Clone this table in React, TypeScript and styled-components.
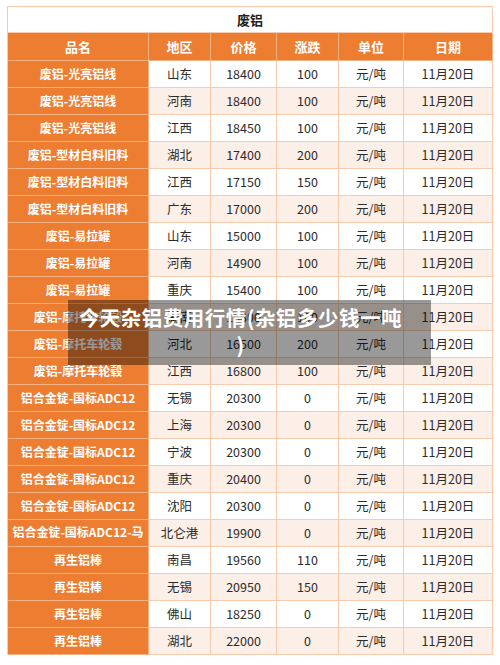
import React from "react"
import styled, { createGlobalStyle } from "styled-components"

const GlobalStyle = createGlobalStyle`
	html, body {
		margin: 0;
		padding: 0;
		background: #ffffff;
	}
	body {
		font-family: "Noto Sans CJK SC", "Noto Sans", "Liberation Sans", sans-serif;
	}
`

const COLS = "141px 62px 66px 62px 65px 89px"

const Page = styled.div`
	position: relative;
	width: 500px;
	height: 665px;
	overflow: hidden;
	padding: 6px 0 0 7px;
	box-sizing: border-box;
`

const Table = styled.div`
	width: 486px;
	border-top: 1px solid #f8cbad;
	border-left: 1px solid #f8cbad;
	box-sizing: border-box;
`

const Title = styled.div`
	height: 26px;
	display: flex;
	align-items: center;
	justify-content: center;
	font-size: 13px;
	font-weight: 700;
	color: #222;
	background: #fff;
	border-right: 1px solid #f8cbad;
	border-bottom: 1px solid #f8cbad;
	box-sizing: border-box;
`

const Row = styled.div<{ $h: number }>`
	display: grid;
	grid-template-columns: ${COLS};
	height: ${(p) => p.$h}px;
`

const Cell = styled.div<{ $kind: "head" | "name" | "data"; $alt?: boolean; $wrap?: boolean }>`
	display: flex;
	align-items: ${(p) => (p.$wrap ? "flex-start" : "center")};
	justify-content: center;
	text-align: center;
	overflow: hidden;
	box-sizing: border-box;
	border-right: 1px solid ${(p) => (p.$kind === "data" ? "#f8cbad" : "#f4b183")};
	border-bottom: 1px solid ${(p) => (p.$kind === "data" ? "#f8cbad" : "#f4b183")};
	background: ${(p) => (p.$kind === "data" ? (p.$alt ? "#fcefe7" : "#ffffff") : "#ed7d31")};
	color: ${(p) => (p.$kind === "data" ? "#2b2b2b" : "#ffffff")};
	font-size: ${(p) => (p.$kind === "data" ? "12.5px" : p.$kind === "head" ? "13px" : "12px")};
	font-weight: ${(p) => (p.$kind === "data" ? 400 : 700)};
	line-height: ${(p) => (p.$wrap ? "22px" : "1")};
	white-space: ${(p) => (p.$wrap ? "normal" : "nowrap")};
	padding: ${(p) => (p.$wrap ? "1px 2px 0" : "0 2px")};
`

const Overlay = styled.div`
	position: absolute;
	left: 68px;
	top: 300px;
	width: 363px;
	height: 65px;
	box-sizing: border-box;
	padding: 4px 28px 0 10px;
	background: rgba(0, 0, 0, 0.4);
	color: #ffffff;
	font-size: 20.5px;
	letter-spacing: 0.5px;
	font-weight: 700;
	line-height: 27px;
	text-align: center;
	line-break: anywhere;
	word-break: break-all;
`

type Item = [string, string, string, string]

const rows: Item[] = [
	["废铝-光亮铝线", "山东", "18400", "100"],
	["废铝-光亮铝线", "河南", "18400", "100"],
	["废铝-光亮铝线", "江西", "18450", "100"],
	["废铝-型材白料旧料", "湖北", "17400", "200"],
	["废铝-型材白料旧料", "江西", "17150", "150"],
	["废铝-型材白料旧料", "广东", "17000", "200"],
	["废铝-易拉罐", "山东", "15000", "100"],
	["废铝-易拉罐", "河南", "14900", "100"],
	["废铝-易拉罐", "重庆", "15400", "100"],
	["废铝-摩托车轮毂", "湖南", "16800", "100"],
	["废铝-摩托车轮毂", "河北", "16500", "200"],
	["废铝-摩托车轮毂", "江西", "16800", "100"],
	["铝合金锭-国标ADC12", "无锡", "20300", "0"],
	["铝合金锭-国标ADC12", "上海", "20300", "0"],
	["铝合金锭-国标ADC12", "宁波", "20300", "0"],
	["铝合金锭-国标ADC12", "重庆", "20400", "0"],
	["铝合金锭-国标ADC12", "沈阳", "20300", "0"],
	["铝合金锭-国标ADC12-马来西亚产", "北仑港", "19900", "0"],
	["再生铝棒", "南昌", "19560", "110"],
	["再生铝棒", "无锡", "20950", "150"],
	["再生铝棒", "佛山", "18250", "0"],
	["再生铝棒", "湖北", "22000", "0"],
]

const heads = ["品名", "地区", "价格", "涨跌", "单位", "日期"]

export default function App() {
	return (
		<Page>
			<GlobalStyle />
			<Table>
				<Title>废铝</Title>
				<Row $h={28}>
					{heads.map((h) => (
						<Cell key={h} $kind="head">
							{h}
						</Cell>
					))}
				</Row>
				{rows.map(([name, area, price, change], i) => {
					const alt = i % 2 === 1
					return (
						<Row key={i} $h={27}>
							<Cell $kind="name" $wrap={name.length > 14}>
								{name}
							</Cell>
							<Cell $kind="data" $alt={alt}>
								{area}
							</Cell>
							<Cell $kind="data" $alt={alt}>
								{price}
							</Cell>
							<Cell $kind="data" $alt={alt}>
								{change}
							</Cell>
							<Cell $kind="data" $alt={alt}>
								元/吨
							</Cell>
							<Cell $kind="data" $alt={alt}>
								11月20日
							</Cell>
						</Row>
					)
				})}
			</Table>
			<Overlay>今天杂铝费用行情(杂铝多少钱一吨)</Overlay>
		</Page>
	)
}
